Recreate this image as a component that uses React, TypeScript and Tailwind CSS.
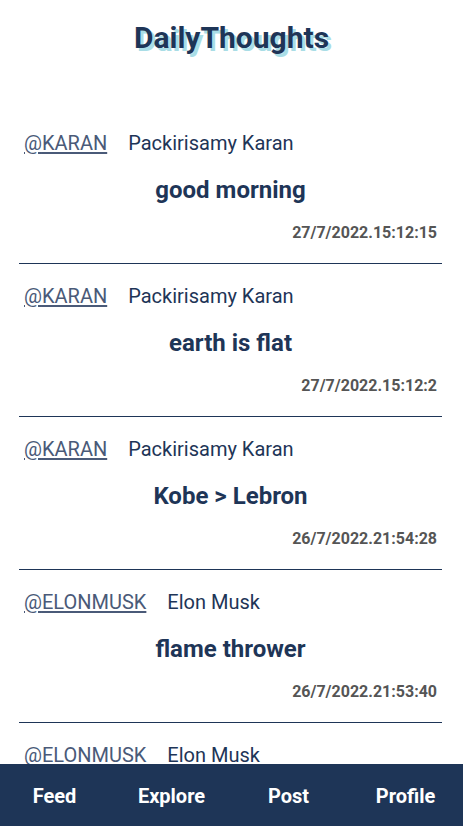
const POSTS = [
  { user: 'KARAN', name: 'Packirisamy Karan', text: 'good morning', date: '27/7/2022.15:12:15' },
  { user: 'KARAN', name: 'Packirisamy Karan', text: 'earth is flat', date: '27/7/2022.15:12:2' },
  { user: 'KARAN', name: 'Packirisamy Karan', text: 'Kobe > Lebron', date: '26/7/2022.21:54:28' },
  { user: 'ELONMUSK', name: 'Elon Musk', text: 'flame thrower', date: '26/7/2022.21:53:40' },
  { user: 'ELONMUSK', name: 'Elon Musk', text: 'to the moon', date: '26/7/2022.21:50:11' },
];

const NAV = ['Feed', 'Explore', 'Post', 'Profile'];

export default function App() {
  return (
    <div className="min-h-screen bg-white font-['Roboto',sans-serif] text-[#1e3557]">
      {/* Header */}
      <h1 className="pt-[18px] pb-[53px] text-center text-[30px] font-bold leading-[40px] [text-shadow:3px_3px_0_#a9dde6]">
        DailyThoughts
      </h1>

      {/* Feed */}
      <div className="pl-[19px] pr-[21px] pb-[70px]">
        {POSTS.map((p, i) => (
          <div key={i} className="border-b border-[#1e3557] pt-[19px] pb-[20px]">
            <div className="flex items-center gap-[21px] px-[5px] text-[20px] leading-[26px]">
              <a href="#" className="text-[#4a5a78] underline underline-offset-[2px]">
                @{p.user}
              </a>
              <span>{p.name}</span>
            </div>
            <p className="mt-[19px] text-center text-[24px] font-bold leading-[30px]">{p.text}</p>
            <p className="mt-[18px] pr-[5px] text-right text-[16px] font-bold leading-[20px] text-[#555]">
              {p.date}
            </p>
          </div>
        ))}
      </div>

      {/* Bottom nav */}
      <nav className="fixed bottom-0 left-0 flex h-[62px] w-full items-center justify-center bg-[#1e3557] pt-[2px] pr-[3px]">
        {NAV.map((item) => (
          <a key={item} href="#" className="w-[117px] shrink-0 text-center text-[20px] font-bold text-white">
            {item}
          </a>
        ))}
      </nav>
    </div>
  );
}
